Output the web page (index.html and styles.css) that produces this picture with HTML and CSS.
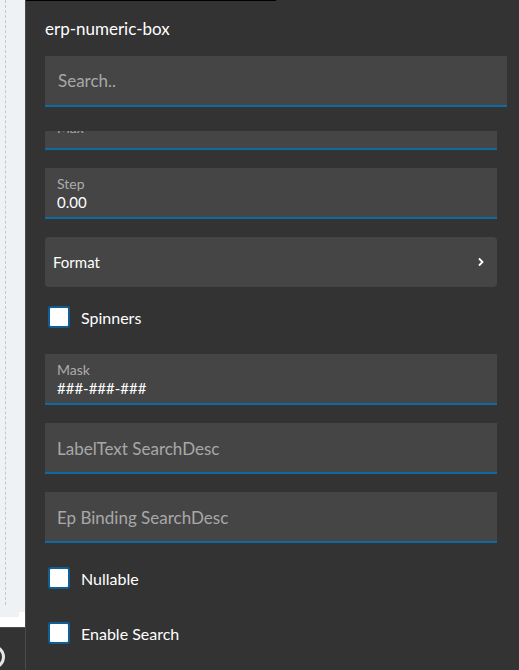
FILE: index.html
```html
<!DOCTYPE html>
<html>
<head>
<meta charset="utf-8">
<link rel="stylesheet" href="styles.css">
</head>
<body>
<div class="side">
  <div class="canvas"><div class="dash"></div><div class="patch"></div></div>
  <div class="strip"></div>
  <div class="foot"><div class="ring"></div></div>
</div>
<div class="panel">
  <div class="topline"></div>
  <div class="title">erp-numeric-box</div>
  <div class="search">Search..</div>
  <div class="scroll">
    <div class="list">
      <div class="field labeled cut"><div class="lbl">Max</div><div class="val"></div></div>
      <div class="field labeled"><div class="lbl">Step</div><div class="val">0.00</div></div>
      <div class="group">
        <span>Format</span>
        <svg class="chev" width="8" height="10" viewBox="0 0 8 10"><polyline points="2,1.5 5.5,5 2,8.5" fill="none" stroke="#fff" stroke-width="1.8"/></svg>
      </div>
      <div class="check first"><span class="box"></span><span>Spinners</span></div>
      <div class="field labeled"><div class="lbl">Mask</div><div class="val">###-###-###</div></div>
      <div class="field ph">LabelText SearchDesc</div>
      <div class="field ph">Ep Binding SearchDesc</div>
      <div class="check later"><span class="box"></span><span>Nullable</span></div>
      <div class="check later"><span class="box"></span><span>Enable Search</span></div>
    </div>
  </div>
</div>
</body>
</html>
```
FILE: styles.css
```css
html, body {
  margin: 0;
  height: 670px;
  overflow: hidden;
}
body {
  display: flex;
  background: #333333;
  font-family: Lato, "Liberation Sans", sans-serif;
  color: #ffffff;
}
.side {
  width: 25px;
  border-right: 1px solid #4a4a4a;
  display: flex;
  flex-direction: column;
  overflow: hidden;
}
.canvas {
  height: 617px;
  background: #eef2f5;
  position: relative;
  display: flex;
}
.dash {
  margin-left: 5px;
  width: 0;
  height: 605px;
  border-left: 1px dashed #c4c8cc;
}
.patch {
  position: absolute;
  right: 0;
  bottom: 0;
  width: 6px;
  height: 5px;
  background: #ffffff;
}
.strip {
  height: 10px;
  background: #ffffff;
}
.foot {
  flex: 1;
  background: #333333;
  border-top: 1px solid #4d4d4d;
}
.ring {
  width: 18px;
  height: 18px;
  margin: 17px 0 0 -19px;
  border-radius: 50%;
  border: 3px solid #e6e6e6;
}
.panel {
  flex: 1;
  display: flex;
  flex-direction: column;
  padding: 0 12px 0 19px;
  min-width: 0;
}
.topline {
  height: 1px;
  width: 250px;
  margin-left: -19px;
  background: #000000;
}
.title {
  margin-top: 18px;
  font-size: 17px;
  line-height: 20px;
}
.search {
  margin-top: 17px;
  height: 49px;
  border-bottom: 2px solid #0d6aa3;
  background: #454545;
  color: #a8a8a8;
  font-size: 17px;
  line-height: 49px;
  padding-left: 13px;
}
.scroll {
  margin-top: 24px;
  flex: 1;
  overflow: hidden;
  padding-right: 10px;
}
.list {
  margin-top: -32px;
}
.field {
  height: 49px;
  background: #454545;
  border-bottom: 2px solid #0d6aa3;
  margin-bottom: 18px;
  padding-left: 12px;
}
.labeled {
  padding-top: 8px;
  height: 41px;
}
.lbl {
  font-size: 14px;
  line-height: 16px;
  color: #acacac;
}
.cut .lbl {
  padding-top: 13px;
}
.val {
  font-size: 15px;
  line-height: 20px;
  color: #ffffff;
}
.ph {
  font-size: 17px;
  line-height: 52px;
  color: #a8a8a8;
}
.group {
  height: 50px;
  background: #454545;
  border-radius: 4px;
  margin-bottom: 18px;
  padding: 0 12px 0 8px;
  display: flex;
  align-items: center;
  justify-content: space-between;
  font-size: 15px;
}
.chev {
  display: block;
}
.check {
  display: flex;
  align-items: center;
  gap: 11px;
  height: 22px;
  padding-left: 3px;
  font-size: 16px;
}
.check.first {
  padding-top: 1px;
  margin-bottom: 26px;
}
.check.later {
  padding-top: 6px;
  margin-bottom: 27px;
}
.box {
  width: 18px;
  height: 18px;
  border: 2px solid #0f5f94;
  border-radius: 3px;
  background: #ffffff;
}
```
